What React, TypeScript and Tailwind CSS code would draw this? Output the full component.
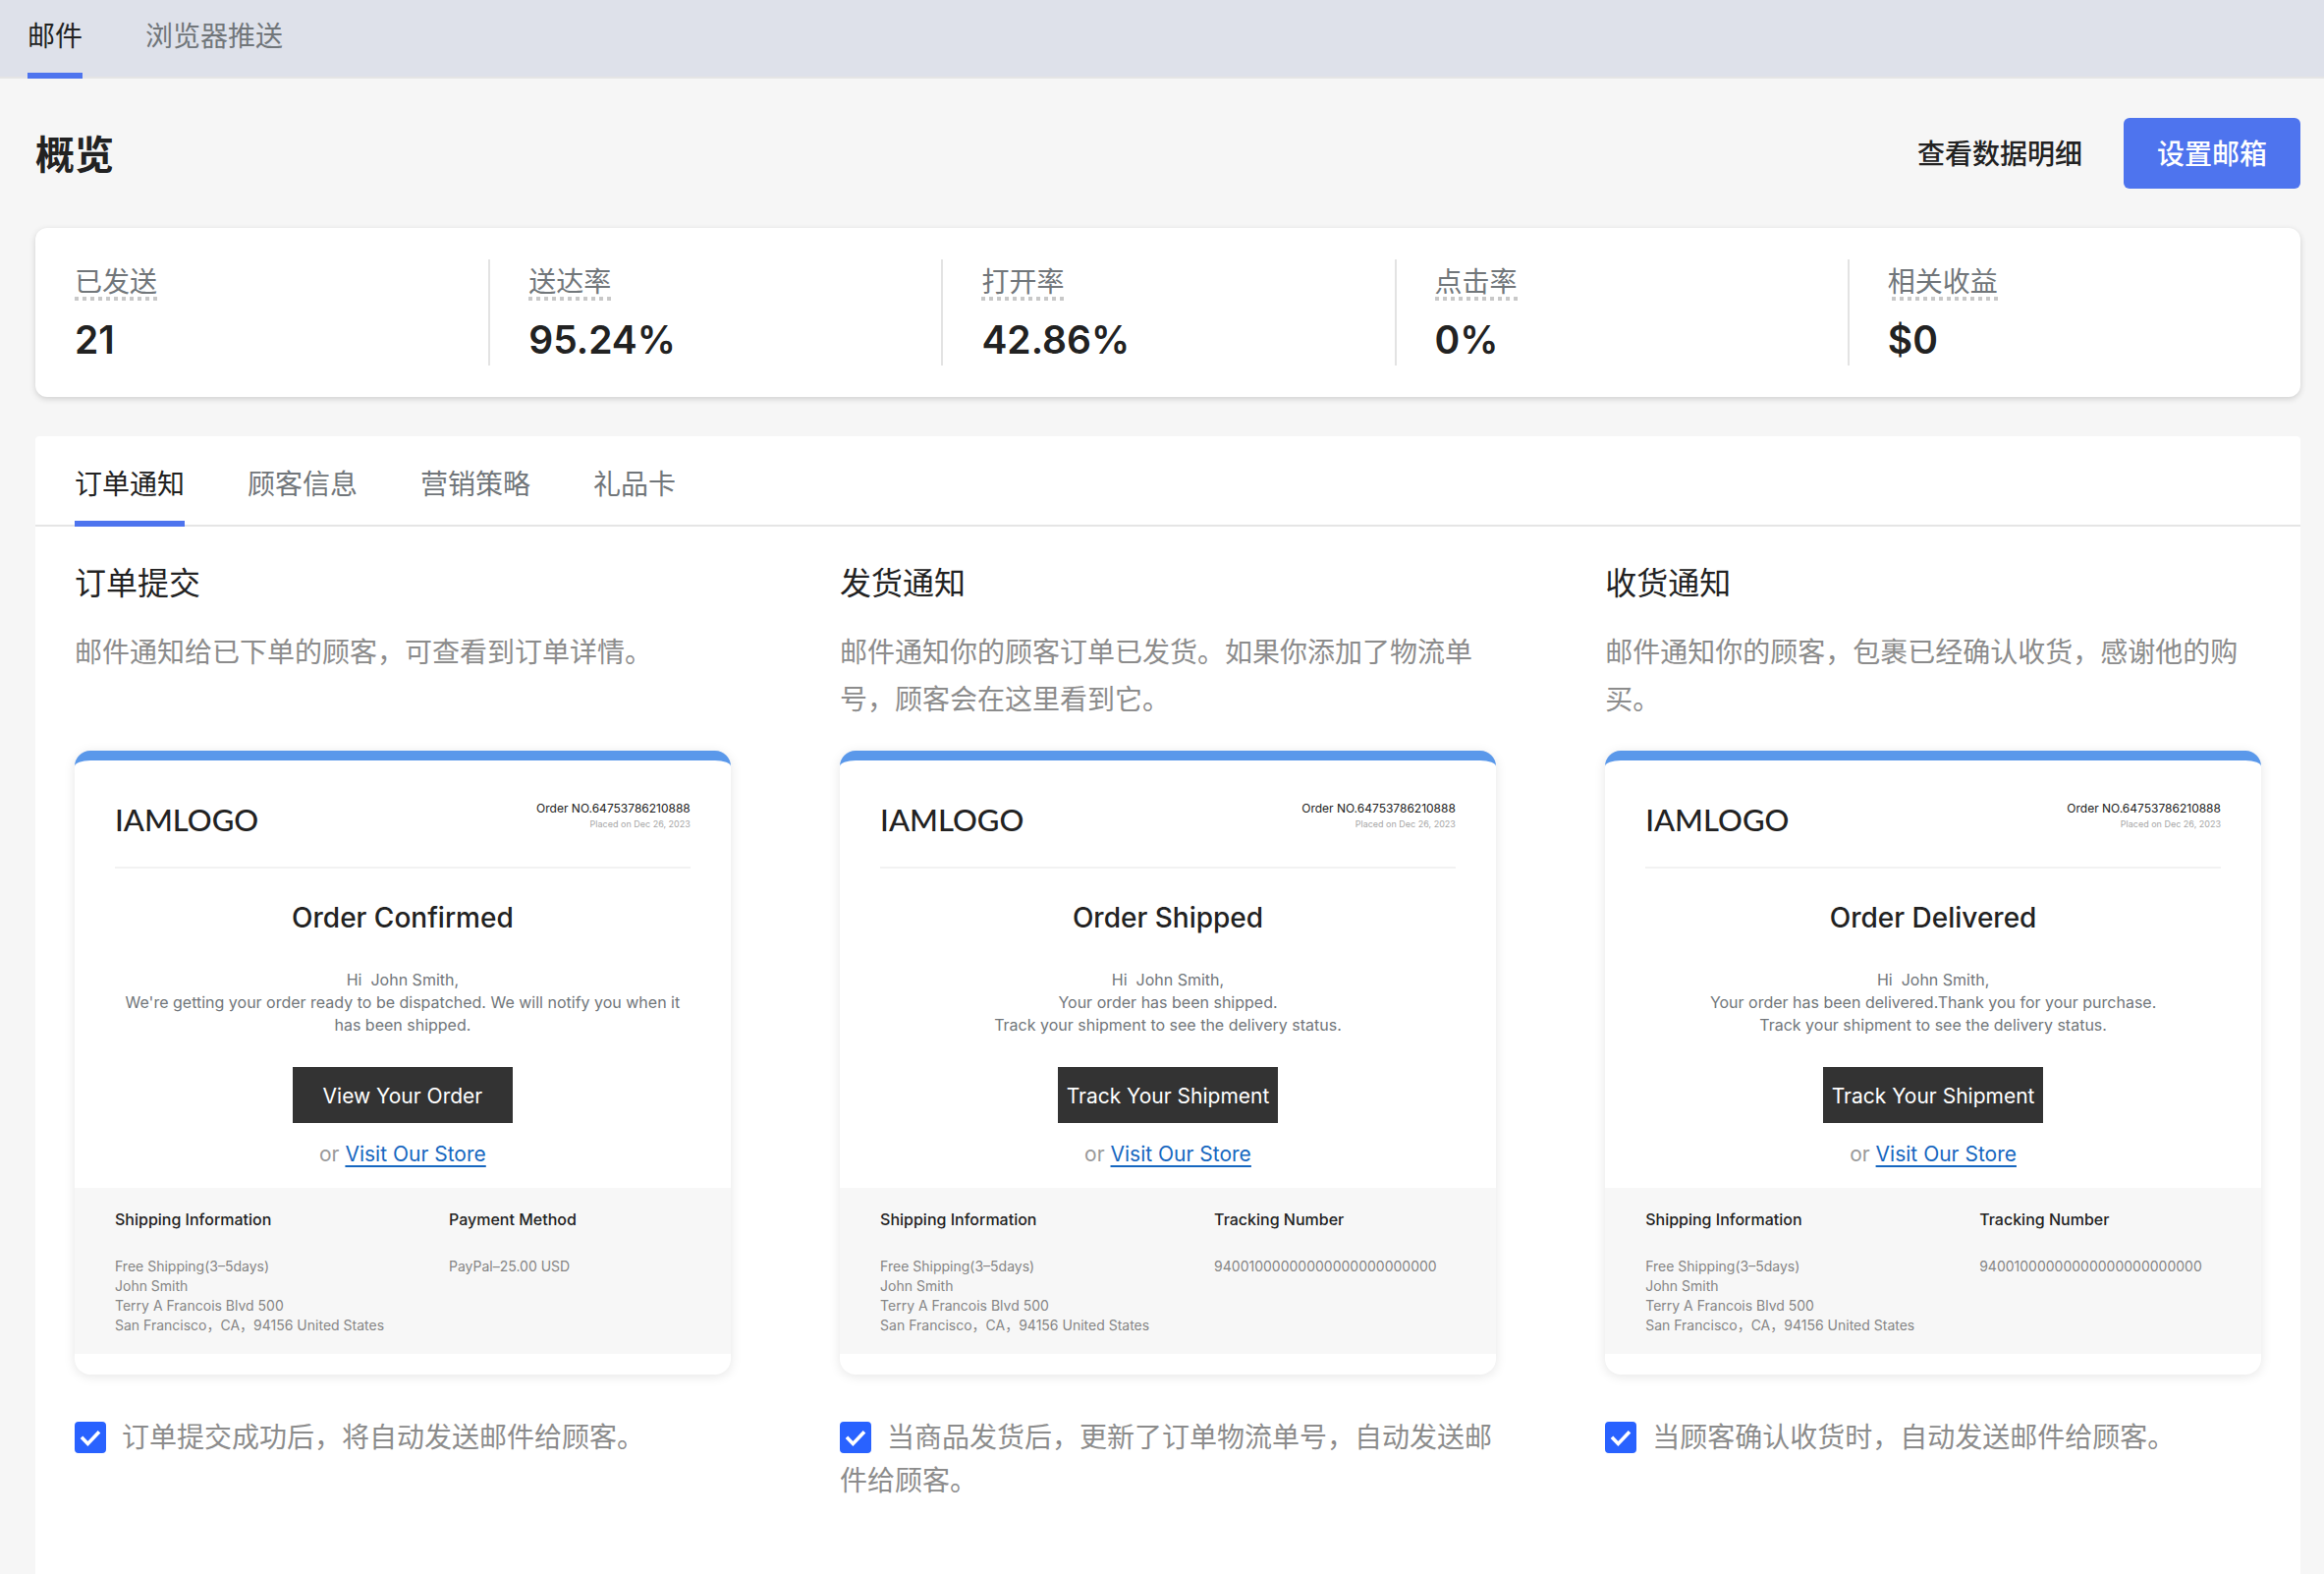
import React from "react";

const TOP_TABS = ["邮件", "浏览器推送"];

const STATS = [
  { label: "已发送", value: "21" },
  { label: "送达率", value: "95.24%" },
  { label: "打开率", value: "42.86%" },
  { label: "点击率", value: "0%" },
  { label: "相关收益", value: "$0" },
];

const PANEL_TABS = ["订单通知", "顾客信息", "营销策略", "礼品卡"];

type Notice = {
  title: string;
  description: string;
  mailTitle: string;
  mailLines: string[];
  action: string;
  sideTitle: string;
  sideText: string;
  option: string;
};

const NOTICES: Notice[] = [
  {
    title: "订单提交",
    description: "邮件通知给已下单的顾客，可查看到订单详情。",
    mailTitle: "Order Confirmed",
    mailLines: [
      "We're getting your order ready to be dispatched. We will notify you when it has been shipped.",
    ],
    action: "View Your Order",
    sideTitle: "Payment Method",
    sideText: "PayPal–25.00 USD",
    option: "订单提交成功后，将自动发送邮件给顾客。",
  },
  {
    title: "发货通知",
    description:
      "邮件通知你的顾客订单已发货。如果你添加了物流单号，顾客会在这里看到它。",
    mailTitle: "Order Shipped",
    mailLines: [
      "Your order has been shipped.",
      "Track your shipment to see the delivery status.",
    ],
    action: "Track Your Shipment",
    sideTitle: "Tracking Number",
    sideText: "94001000000000000000000000",
    option: "当商品发货后，更新了订单物流单号，自动发送邮件给顾客。",
  },
  {
    title: "收货通知",
    description: "邮件通知你的顾客，包裹已经确认收货，感谢他的购买。",
    mailTitle: "Order Delivered",
    mailLines: [
      "Your order has been delivered.Thank you for your purchase.",
      "Track your shipment to see the delivery status.",
    ],
    action: "Track Your Shipment",
    sideTitle: "Tracking Number",
    sideText: "94001000000000000000000000",
    option: "当顾客确认收货时，自动发送邮件给顾客。",
  },
];

function Tabs({ items }: { items: string[] }) {
  return (
    <div role="tablist" className="flex gap-16">
      {items.map((item, i) => (
        <button
          key={item}
          type="button"
          role="tab"
          aria-selected={i === 0}
          className={
            i === 0
              ? "-mb-0.5 border-b-6 border-[#4e74ee] pb-6 text-[#222]"
              : "-mb-0.5 border-b-6 border-transparent pb-6 text-[#71767a]"
          }
        >
          {item}
        </button>
      ))}
    </div>
  );
}

function MailPreview({ notice }: { notice: Notice }) {
  return (
    <div className="overflow-hidden rounded-2xl border-t-10 border-[#5a98ea] bg-white pb-[21px] font-['Inter','Noto_Sans_CJK_SC',sans-serif] shadow-[0_2px_12px_rgba(0,0,0,0.1)]">
      <div className="px-[41px]">
        <div className="flex h-[110px] items-start justify-between border-b-2 border-[#f2f2f2] pt-10">
          <span className="font-['Lato',sans-serif] text-[31px] leading-10 font-medium text-[#222]">
            IAMLOGO
          </span>
          <div className="text-right">
            <p className="text-xs leading-[17px] text-[#222]">
              Order NO.64753786210888
            </p>
            <p className="text-[9px] leading-4 text-[#a6a6a6]">
              Placed on Dec 26, 2023
            </p>
          </div>
        </div>
        <h3 className="mt-[30px] text-center text-[28px] leading-10 font-medium text-[#222]">
          {notice.mailTitle}
        </h3>
        <div className="mt-8 h-[68px] text-center text-base leading-[23px] text-[#71767a]">
          <p className="whitespace-pre">Hi  John Smith,</p>
          {notice.mailLines.map((line) => (
            <p key={line}>{line}</p>
          ))}
        </div>
        <div className="mt-8 flex flex-col items-center">
          <button
            type="button"
            className="h-[57px] w-56 bg-[#333] pt-0.5 text-[21px] whitespace-nowrap text-white"
          >
            {notice.action}
          </button>
          <p className="mt-4 mb-[18px] text-[21px] leading-8 text-[#999]">
            or{" "}
            <a
              href="#store"
              className="text-[#1667c0] underline decoration-2 underline-offset-4"
            >
              Visit Our Store
            </a>
          </p>
        </div>
      </div>
      <div className="grid h-[169px] grid-cols-[340px_1fr] bg-[#f7f7f7] px-[41px] pt-5">
        <div>
          <h4 className="text-base font-medium text-[#222]">
            Shipping Information
          </h4>
          <address className="mt-[26px] text-sm leading-5 text-[#858585] not-italic">
            Free Shipping(3–5days)
            <br />
            John Smith
            <br />
            Terry A Francois Blvd 500
            <br />
            San Francisco，CA，94156 United States
          </address>
        </div>
        <div>
          <h4 className="text-base font-medium text-[#222]">
            {notice.sideTitle}
          </h4>
          <p className="mt-[26px] text-sm leading-5 text-[#858585]">
            {notice.sideText}
          </p>
        </div>
      </div>
    </div>
  );
}

function AutoSendOption({ text }: { text: string }) {
  return (
    <label className="mt-[42px] block text-[28px] leading-11 text-[#8c8c8c]">
      <span className="relative mr-4 mb-1 inline-block size-8 align-middle">
        <input
          type="checkbox"
          defaultChecked
          className="peer block size-8 appearance-none rounded border-2 border-[#2962ff] bg-white checked:bg-[#2962ff]"
        />
        <svg
          viewBox="0 0 32 32"
          className="pointer-events-none absolute inset-0 hidden size-8 peer-checked:block"
          fill="none"
          stroke="white"
          strokeWidth="3.6"
        >
          <path d="M7 15.8 L13.4 22.4 L25 10.3" />
        </svg>
      </span>
      {text}
    </label>
  );
}

export default function App() {
  return (
    <div className="min-h-screen bg-[#f6f6f6] font-['Inter','Noto_Sans_CJK_SC',sans-serif] text-[28px] text-[#222]">
      <nav className="flex h-20 items-stretch border-b-2 border-[#e5e5e5] bg-[#dee1ea] px-7 pt-4">
        <Tabs items={TOP_TABS} />
      </nav>

      <main className="pr-6 pl-9">
        <header className="flex items-center justify-between pt-10">
          <h1 className="pt-1 text-[40px] leading-15 font-bold">概览</h1>
          <div className="flex items-center gap-[42px] font-medium">
            <a href="#details" className="pt-0.5">
              查看数据明细
            </a>
            <button
              type="button"
              className="h-[72px] rounded-md bg-[#4e74ee] px-[34px] pt-0.5 text-white"
            >
              设置邮箱
            </button>
          </div>
        </header>

        <dl className="mt-10 grid grid-cols-5 rounded-xl bg-white py-8 shadow-[0_2px_6px_rgba(0,0,0,0.16)]">
          {STATS.map((stat) => (
            <div
              key={stat.label}
              className="h-[108px] border-[#e3e3e3] pl-10 not-first:border-l-2 not-first:pl-[39px]"
            >
              <dt className="flex">
                <span className="bg-[linear-gradient(90deg,transparent_50%,#c8c8c8_50%)] bg-[length:8px_4px] bg-right-bottom bg-repeat-x pt-1 leading-[38px] text-[#71767a]">
                  {stat.label}
                </span>
              </dt>
              <dd className="mt-3.5 text-[39px] leading-[52px] font-semibold">
                {stat.value}
              </dd>
            </div>
          ))}
        </dl>

        <section className="mt-10 rounded-t bg-white pb-20">
          <div className="flex h-[92px] items-stretch border-b-2 border-[#e5e5e5] px-10 pt-7">
            <Tabs items={PANEL_TABS} />
          </div>
          <div className="grid grid-cols-3 gap-x-[5%] px-10 pt-9">
            {NOTICES.map((notice) => (
              <article key={notice.title}>
                <h2 className="text-[32px] leading-11">{notice.title}</h2>
                <p className="mt-6 mb-7 h-24 leading-12 text-[#8c8c8c]">
                  {notice.description}
                </p>
                <MailPreview notice={notice} />
                <AutoSendOption text={notice.option} />
              </article>
            ))}
          </div>
        </section>
      </main>
    </div>
  );
}
